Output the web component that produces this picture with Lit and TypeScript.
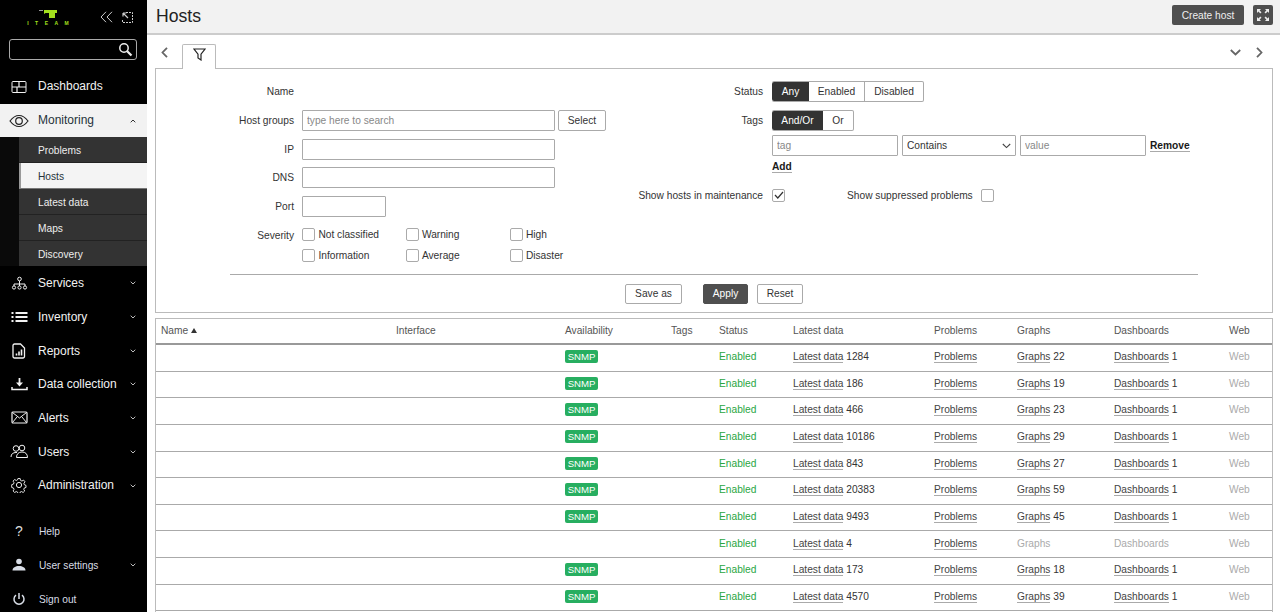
import { LitElement, html, css, svg } from "lit";
import { customElement } from "lit/decorators.js";

const I = (w: number, h: number, body: unknown) =>
  html`<svg width=${w} height=${h} viewBox="0 0 ${w} ${h}" fill="none" stroke="currentColor" stroke-width="1">${body}</svg>`;

const icons: Record<string, unknown> = {
  dash: I(16, 14, svg`<rect x="1" y="1.5" width="14" height="11" rx="1"/><path d="M1 7h14M8 1.5V7M6 7v5.5" stroke-width="1.2"/>`),
  eye: I(20, 14, svg`<path d="M1 7C4 3 7 1.5 10 1.5S16 3 19 7c-3 4-6 5.500-9 5.500S4 11 1 7z" stroke-width="1.2"/><circle cx="10" cy="7" r="3.300" stroke-width="1.2"/>`),
  services: I(17, 14, svg`<circle cx="8.500" cy="3" r="1.800"/><path d="M8.500 5v3M3 10V8h11v2M8.500 8v2"/><circle cx="3" cy="11.500" r="1.600"/><circle cx="8.500" cy="11.500" r="1.600"/><circle cx="14" cy="11.500" r="1.600"/>`),
  inventory: I(17, 12, svg`<path d="M4.500 2h12M4.500 6h12M4.500 10h12" stroke-width="1.800"/><path d="M0.500 2h2M0.500 6h2M0.500 10h2" stroke-width="1.800"/>`),
  reports: I(14, 16, svg`<path d="M2.500 1h6l4 4v8.500a1.500 1.500 0 0 1-1.500 1.500h-8.500A1.500 1.500 0 0 1 1 13.500V2.500A1.500 1.500 0 0 1 2.500 1z" stroke-width="1.300"/><path d="M4.500 12.500v-2M7 12.500v-4M9.500 12.500v-6" stroke-width="1.600"/>`),
  data: I(17, 14, svg`<path d="M8.500 1v7" stroke-width="1.800"/><path d="M5 5.500l3.500 4 3.500-4z" fill="currentColor" stroke="none"/><path d="M1 10v2.500h15V10" stroke-width="1.500"/>`),
  alerts: I(17, 13, svg`<rect x="1" y="1" width="15" height="11" rx="1" stroke-width="1.200"/><path d="M1.500 1.500L8.500 7l7-5.500M1.500 11.500L6 6M15.500 11.500L11 6"/>`),
  users: I(18, 15, svg`<circle cx="6" cy="4.500" r="2.800"/><path d="M1 13c0-3 2-4.500 5-4.500h1"/><circle cx="12" cy="4" r="2.800"/><path d="M6.500 13.500c0-3.500 2-5.500 5.500-5.500s5.500 2 5.500 5.500z"/>`),
  admin: I(16, 16, svg`<circle cx="8" cy="8" r="2.600"/><path d="M6.800 1h2.400l.4 2 1.500.7 1.800-1 1.500 1.800-1.200 1.600.4 1.500 1.900.8v2.200l-1.900.6-.5 1.500 1 1.700-1.700 1.600-1.700-1-1.500.6-.4 1.900H6.900l-.5-1.900-1.400-.6-1.700 1-1.700-1.600 1-1.700-.6-1.500-1.900-.6V7.600l1.900-.6.600-1.500-1.100-1.700L3.300 2.100l1.800 1 1.300-.7z" transform="translate(.6 .6) scale(.93)"/>`),
  user: I(16, 14, svg`<circle cx="8" cy="3.500" r="2.800" fill="currentColor" stroke="none"/><path d="M1.500 12.500c0-3 3-4.500 6.500-4.500s6.500 1.500 6.500 4.500z" fill="currentColor" stroke="none"/>`),
  power: I(14, 14, svg`<path d="M7 1v6" stroke-width="1.500"/><path d="M4 3.200a5 5 0 1 0 6 0" stroke-width="1.500"/>`),
};

const down = html`<svg class="chev" width="6" height="4" viewBox="0 0 6 4" fill="none" stroke="currentColor"><path d="M.7.700L3 3 5.300.7"/></svg>`;
const up = html`<svg class="chev" width="6" height="4" viewBox="0 0 6 4" fill="none" stroke="currentColor"><path d="M.7 3.300L3 1l2.300 2.300"/></svg>`;

type Row = { snmp: boolean; data: string; graphs?: string; dash?: string };
const rows: Row[] = [
  { snmp: true, data: "1284", graphs: "22", dash: "1" },
  { snmp: true, data: "186", graphs: "19", dash: "1" },
  { snmp: true, data: "466", graphs: "23", dash: "1" },
  { snmp: true, data: "10186", graphs: "29", dash: "1" },
  { snmp: true, data: "843", graphs: "27", dash: "1" },
  { snmp: true, data: "20383", graphs: "59", dash: "1" },
  { snmp: true, data: "9493", graphs: "45", dash: "1" },
  { snmp: false, data: "4" },
  { snmp: true, data: "173", graphs: "18", dash: "1" },
  { snmp: true, data: "4570", graphs: "39", dash: "1" },
];

const check = html`<svg width="10" height="8" viewBox="0 0 10 8" fill="none" stroke="#333" stroke-width="1.200"><path d="M1 4l2.800 3L9 1"/></svg>`;

@customElement("app-root")
export class AppRoot extends LitElement {
  static styles = css`
    :host { display: flex; width: 1280px; height: 612px; overflow: hidden; background: #fff; font: 10.2px "Liberation Sans", Arial, sans-serif; color: #333; }
    * { box-sizing: border-box; }
    .side { width: 147px; flex: none; background: #000; color: #f2f2f2; display: flex; flex-direction: column; }
    .top { height: 39px; display: flex; flex: none; position: relative; }
    .logo { width: 94px; flex: none; display: flex; flex-direction: column; align-items: center; padding: 10px 0 0 2px; color: #a4e01e; }
    .logo svg { flex: none; }
    .logo span { font: bold 5px "Liberation Sans", sans-serif; letter-spacing: 6.5px; line-height: 5px; margin: 3px -6.5px 0 0; }
    .topicons { display: flex; gap: 9px; align-items: center; margin: 0 0 5px 6px; color: #ccc; }
    .search { margin-left: 9px; width: 128px; height: 21px; flex: none; border: 1px solid #aaa; border-radius: 3px; display: flex; justify-content: flex-end; align-items: center; padding-right: 3px; color: #eee; }
    nav { margin-top: 10px; display: flex; flex-direction: column; flex: none; }
    .item { height: 33.7px; flex: none; display: flex; align-items: center; font-size: 12px; position: relative; padding-left: 38px; color: #f2f2f2; }
    .item.nudge { padding-bottom: 1px; }
    .item .ic { position: absolute; left: 0; width: 38px; display: flex; justify-content: center; top: 0; bottom: 0; align-items: center; }
    .item .chev { position: absolute; left: 129.500px; top: 15px; color: #bbb; }
    .item.active { background: #f2f2f2; color: #26323a; }
    .item.active .chev { color: #333; }
    .item.active .ic { color: #222; }
    .sub { height: 129px; flex: none; padding-left: 19px; background: #0a0a0a; display: flex; flex-direction: column; }
    .sub div { flex: 1; background: #333; color: #eee; border-bottom: 1px solid #222; display: flex; align-items: center; padding: 2px 0 0 19px; }
    .sub div:last-child { border-bottom: 0; }
    .sub .cur { background: #f4f4f4; color: #26323a; border-left: 2px solid #999; padding-left: 17px; border-bottom: 1px solid #777; }
    .bottom { margin-top: 12px; }
    .bottom .item { height: 34px; font-size: 10.2px; color: #d8dde6; padding-left: 39px; }
    .q { font-size: 14px; color: #ddd; }
    .main { flex: 1; min-width: 0; display: flex; flex-direction: column; }
    header { height: 35px; flex: none; background: #f2f2f2; border-bottom: 2px solid #ccc; display: flex; align-items: center; padding: 0 7px 3px 9px; gap: 9px; }
    h1 { font: 17.600px "Liberation Sans", sans-serif; margin: 0; padding-top: 2px; color: #222; flex: 1; }
    .create { height: 20px; width: 72px; background: #4f4f4f; color: #eee; border-radius: 2px; display: flex; align-items: center; justify-content: center; }
    .fs { width: 20px; height: 20px; background: #4f4f4f; border-radius: 2px; display: flex; align-items: center; justify-content: center; color: #eee; }
    .tabs { height: 33px; flex: none; display: flex; align-items: flex-end; padding: 0 7px 0 14px; color: #666; }
    .arrow { height: 25px; display: flex; align-items: center; padding-bottom: 6px; }
    .tab { width: 34px; height: 25px; margin: 0 0 -1px 14px; border: 1px solid #bbb; border-bottom: 0; border-radius: 2px 2px 0 0; background: #fff; position: relative; display: flex; justify-content: center; padding-top: 3px; color: #222; }
    .spacer { flex: 1; }
    .box { margin: 0 7px 0 8px; border: 1px solid #bbb; flex: none; height: 245px; display: flex; flex-direction: column; padding-top: 12.300px; }
    .form { display: flex; height: 192.700px; flex: none; }
    .col { display: flex; flex-direction: column; }
    .col.l { width: 464px; }
    .row { display: grid; grid-template-columns: 138px 1fr; column-gap: 8px; align-items: center; height: 21px; margin-bottom: 7.700px; }
    .lab { text-align: right; }
    .sevlab { padding-top: 3px; }
    .inline { display: flex; gap: 3px; }
    input, select { height: 21px; border: 1px solid #aaa; border-radius: 1px; padding: 0 4px; font: 10.2px "Liberation Sans", sans-serif; color: #333; background: #fff; outline: none; }
    input::placeholder { color: #888; opacity: 1; }
    .w253 { width: 253px; } .w84 { width: 84px; } .w126 { width: 126px; }
    .selwrap { position: relative; width: 114px; height: 21px; flex: none; }
    select { width: 114px; appearance: none; display: block; }
    .selwrap svg { position: absolute; right: 5px; top: 8px; pointer-events: none; color: #444; }
    button { font: 10.2px "Liberation Sans", sans-serif; color: #333; background: #fff; border: 1px solid #aaa; border-radius: 2px; height: 21px; padding: 0; }
    .sel { width: 48px; }
    .sev { display: grid; grid-template-columns: 103.500px 104px auto; row-gap: 7px; margin-top: 1px; }
    .sev label, .chk { display: flex; align-items: center; gap: 3.400px; height: 14px; }
    .cb { width: 13px; height: 13px; border: 1px solid #aaa; border-radius: 2px; flex: none; display: flex; align-items: center; justify-content: center; background: #fff; }
    .col.r { width: 630px; }
    .rrow { display: grid; grid-template-columns: 143px 1fr; column-gap: 9px; align-items: center; }
    .seg { display: flex; height: 21px; border: 1px solid #aaa; border-left: 0; border-radius: 2px; width: max-content; }
    .seg span { display: flex; align-items: center; justify-content: center; border-left: 1px solid #aaa; }
    .seg .on { background: #333; color: #fff; border-left: 0; border-radius: 2px 0 0 2px; }
    .seg .on + span { border-left: 0; }
    .ext { font-weight: bold; color: #1a1a1a; border-bottom: 1px solid #aaa; line-height: 11px; display: inline-block; width: max-content; }
    .tagline { display: flex; gap: 4px; align-items: center; }
    hr { width: 968px; border: 0; border-top: 1px solid #aaa; margin: 0 0 9px 74px; flex: none; }
    .acts { display: flex; justify-content: center; }
    .acts button { height: 20px; }
    .apply { background: #4f4f4f; color: #fff; border-color: #4f4f4f; }
    .table { margin: 5px 7px 0 8px; border: 1px solid #bbb; border-bottom: 0; flex: none; }
    .tr { display: grid; grid-template-columns: 235px 169px 106px 48px 74px 141px 83px 97px 115px 1fr; height: 26.650px; border-bottom: 1px solid #aaa; align-items: center; }
    .tr > div { padding: 0 0 2.400px 5px; white-space: nowrap; }
    .th { height: 26px; border-bottom: 2px solid #999; color: #555; }
    .th > div { padding-bottom: 1px; }
    .snmp { display: inline-flex; width: 33px; height: 13px; background: #27ae60; color: #fff; border-radius: 2px; align-items: center; justify-content: center; font-size: 9.600px; vertical-align: middle; }
    .ok { color: #2aa63f; }
    a { color: #444; border-bottom: 1px solid #aaa; }
    .mute { color: #aaa; }
    .sort { display: inline-block; width: 0; height: 0; border: 3.500px solid transparent; border-top: 0; border-bottom: 5px solid #333; margin: 0 0 1px 3px; }
  `;

  private sideItem(icon: unknown, label: string, chev = true, cls = "") {
    return html`<div class="item ${cls}"><span class="ic">${icon}</span>${label}${chev ? down : ""}</div>`;
  }

  render() {
    return html`
      <aside class="side">
        <div class="top">
          <div class="logo">
            <svg width="18" height="8" viewBox="0 0 18 8"><path d="M0 0h4v1H0z" fill="#999"/><path d="M5 0h13v3h-2v5h-6V3H6.500L5 4z" fill="#a4e01e"/></svg>
            <span>ITEAM</span>
          </div>
          <div class="topicons">
            <svg width="13" height="12" viewBox="0 0 13 12" fill="none" stroke="currentColor"><path d="M6 .8L1 6l5 5.200M12 .8L7 6l5 5.200"/></svg>
            <svg width="11" height="11" viewBox="0 0 11 11" fill="none" stroke="currentColor"><path d="M4 .5h6.500V10.500H.5V7" stroke-dasharray="2 1"/><path d="M1 1l5 5M1 1v3.500M1 1h3.500" stroke-width="1.200"/></svg>
          </div>
        </div>
        <div class="search">
          <svg width="15" height="15" viewBox="0 0 15 15" fill="none" stroke="currentColor"><circle cx="6" cy="6" r="4.200" stroke-width="1.500"/><path d="M9.200 9.200L13.500 13.500" stroke-width="2.200"/></svg>
        </div>
        <nav>
          ${this.sideItem(icons.dash, "Dashboards", false, "nudge")}
          <div class="item active nudge"><span class="ic">${icons.eye}</span>Monitoring${up}</div>
          <div class="sub">
            <div>Problems</div><div class="cur">Hosts</div><div>Latest data</div><div>Maps</div><div>Discovery</div>
          </div>
          ${this.sideItem(icons.services, "Services")}
          ${this.sideItem(icons.inventory, "Inventory")}
          ${this.sideItem(icons.reports, "Reports")}
          ${this.sideItem(icons.data, "Data collection")}
          ${this.sideItem(icons.alerts, "Alerts")}
          ${this.sideItem(icons.users, "Users")}
          ${this.sideItem(icons.admin, "Administration")}
        </nav>
        <div class="bottom">
          ${this.sideItem(html`<span class="q">?</span>`, "Help", false)}
          ${this.sideItem(icons.user, "User settings")}
          ${this.sideItem(icons.power, "Sign out", false)}
        </div>
      </aside>
      <div class="main">
        <header>
          <h1>Hosts</h1>
          <div class="create">Create host</div>
          <div class="fs"><svg width="14" height="14" viewBox="0 0 14 14" fill="currentColor"><path d="M1 1h4L3.600 2.400 5.500 4.300 4.300 5.500 2.400 3.600 1 5zM13 1v4l-1.400-1.400-1.900 1.900-1.200-1.200 1.900-1.900L9 1zM1 13V9l1.400 1.400 1.900-1.900 1.200 1.200-1.900 1.900L5 13zM13 13H9l1.400-1.400-1.900-1.900 1.200-1.200 1.900 1.900L13 9z"/></svg></div>
        </header>
        <div class="tabs">
          <div class="arrow"><svg width="7" height="11" viewBox="0 0 7 11" fill="none" stroke="currentColor" stroke-width="1.800"><path d="M6 .8L1.500 5.500 6 10.200"/></svg></div>
          <div class="tab"><svg width="13" height="13" viewBox="0 0 13 13" fill="none" stroke="currentColor" stroke-width="1.200"><path d="M1 1h11L8 6.200V12L5 10V6.200z"/></svg></div>
          <div class="spacer"></div>
          <div class="arrow"><svg width="11" height="7" viewBox="0 0 11 7" fill="none" stroke="currentColor" stroke-width="1.800"><path d="M.8 1l4.700 4.500L10.200 1"/></svg></div>
          <div class="arrow" style="margin:0 10px 0 15px"><svg width="7" height="11" viewBox="0 0 7 11" fill="none" stroke="currentColor" stroke-width="1.800"><path d="M1 .8L5.500 5.500 1 10.200"/></svg></div>
        </div>
        <section class="box">
          <div class="form">
            <div class="col l">
              <div class="row"><span class="lab">Name</span><span></span></div>
              <div class="row"><span class="lab">Host groups</span><div class="inline"><input class="w253" placeholder="type here to search" /><button class="sel">Select</button></div></div>
              <div class="row"><span class="lab">IP</span><input class="w253" /></div>
              <div class="row"><span class="lab">DNS</span><input class="w253" /></div>
              <div class="row"><span class="lab">Port</span><input class="w84" /></div>
              <div class="row" style="height:auto;align-items:start;margin-top:2px">
                <span class="lab sevlab">Severity</span>
                <div class="sev">
                  <label><span class="cb"></span>Not classified</label>
                  <label><span class="cb"></span>Warning</label>
                  <label><span class="cb"></span>High</label>
                  <label><span class="cb"></span>Information</label>
                  <label><span class="cb"></span>Average</label>
                  <label><span class="cb"></span>Disaster</label>
                </div>
              </div>
            </div>
            <div class="col r">
              <div class="rrow" style="margin-bottom:8px"><span class="lab">Status</span>
                <div class="seg"><span class="on" style="width:37px">Any</span><span style="width:55px">Enabled</span><span style="width:59px">Disabled</span></div>
              </div>
              <div class="rrow" style="margin-bottom:4px"><span class="lab">Tags</span>
                <div class="seg"><span class="on" style="width:51px">And/Or</span><span style="width:30px">Or</span></div>
              </div>
              <div class="rrow"><span></span>
                <div class="tagline"><input class="w126" placeholder="tag" /><div class="selwrap"><select><option>Contains</option></select><svg width="9" height="6" viewBox="0 0 9 6" fill="none" stroke="currentColor" stroke-width="1.100"><path d="M.8 1l3.700 3.600L8.200 1"/></svg></div><input class="w126" placeholder="value" /><span class="ext">Remove</span></div>
              </div>
              <div class="rrow" style="margin-top:5px"><span></span><span class="ext">Add</span></div>
              <div class="rrow" style="margin-top:15px"><span class="lab">Show hosts in maintenance</span>
                <div class="chk" style="gap:62px"><span class="cb">${check}</span><span class="chk" style="gap:8px">Show suppressed problems <span class="cb"></span></span></div>
              </div>
            </div>
          </div>
          <hr />
          <div class="acts">
            <button style="width:57px">Save as</button>
            <button class="apply" style="width:45px;margin-left:21px">Apply</button>
            <button style="width:46px;margin-left:9px">Reset</button>
          </div>
        </section>
        <section class="table">
          <div class="tr th">
            <div>Name<i class="sort"></i></div><div>Interface</div><div>Availability</div><div>Tags</div><div>Status</div><div>Latest data</div><div>Problems</div><div>Graphs</div><div>Dashboards</div><div>Web</div>
          </div>
          ${rows.map(
            (r) => html`<div class="tr">
              <div></div><div></div>
              <div>${r.snmp ? html`<span class="snmp">SNMP</span>` : ""}</div>
              <div></div>
              <div class="ok">Enabled</div>
              <div><a>Latest data</a> ${r.data}</div>
              <div><a>Problems</a></div>
              <div>${r.graphs ? html`<a>Graphs</a> ${r.graphs}` : html`<span class="mute">Graphs</span>`}</div>
              <div>${r.dash ? html`<a>Dashboards</a> ${r.dash}` : html`<span class="mute">Dashboards</span>`}</div>
              <div class="mute">Web</div>
            </div>`
          )}
          <div class="tr"></div>
        </section>
      </div>
    `;
  }
}
